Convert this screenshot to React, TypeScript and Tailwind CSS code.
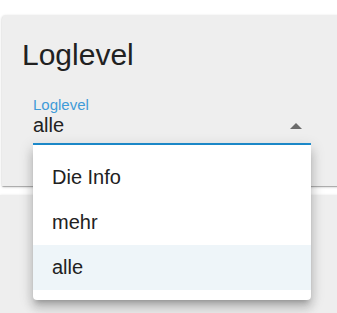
import React from "react";

export default function App() {
  const items = ["Die Info", "mehr", "alle"];
  return (
    <div
      className="relative w-[337px] h-[313px] overflow-hidden bg-white"
      style={{ fontFamily: '"Liberation Sans", Arial, sans-serif' }}
    >
      <div className="pt-[15px]">
        <div className="ml-[2px] mr-[-12px] h-[171px] rounded-tl-[4px] bg-[#eeeeee] pt-[23px] pl-[20px] shadow-[0_1px_3px_rgba(0,0,0,0.2),0_1px_1px_rgba(0,0,0,0.14),0_2px_1px_-1px_rgba(0,0,0,0.12)]">
          <div className="text-[30px] leading-[34px] text-[#212121]">Loglevel</div>
          <div className="relative ml-[11px] mt-[24px] w-[278px]">
            <div className="text-[15px] leading-[17px] text-[#3f9bd8]">Loglevel</div>
            <div className="flex items-center justify-between border-b-2 border-[#1e8fd2] pb-[6px] pr-[9px]">
              <span className="text-[20px] leading-[24px] text-[#212121]">alle</span>
              <svg width="12" height="6" viewBox="0 0 12 6" className="mt-[2px]">
                <path d="M0 6 L6 0 L12 6 Z" fill="#6b6b6b" />
              </svg>
            </div>
            <div className="absolute left-0 top-full z-10 w-[278px] rounded-b-[4px] bg-white py-[10px] shadow-[0_5px_5px_-3px_rgba(0,0,0,0.2),0_8px_10px_1px_rgba(0,0,0,0.14),0_3px_14px_2px_rgba(0,0,0,0.12)]">
              {items.map((it) => (
                <div
                  key={it}
                  className={`h-[45px] pl-[19px] text-[20px] leading-[45px] text-[#212121] ${
                    it === "alle" ? "bg-[#eef5f9]" : ""
                  }`}
                >
                  {it}
                </div>
              ))}
            </div>
          </div>
        </div>
        <div className="mt-[9px] mr-[-12px] h-[200px] bg-[#eeeeee] shadow-[0_1px_3px_rgba(0,0,0,0.2)]" />
      </div>
    </div>
  );
}
